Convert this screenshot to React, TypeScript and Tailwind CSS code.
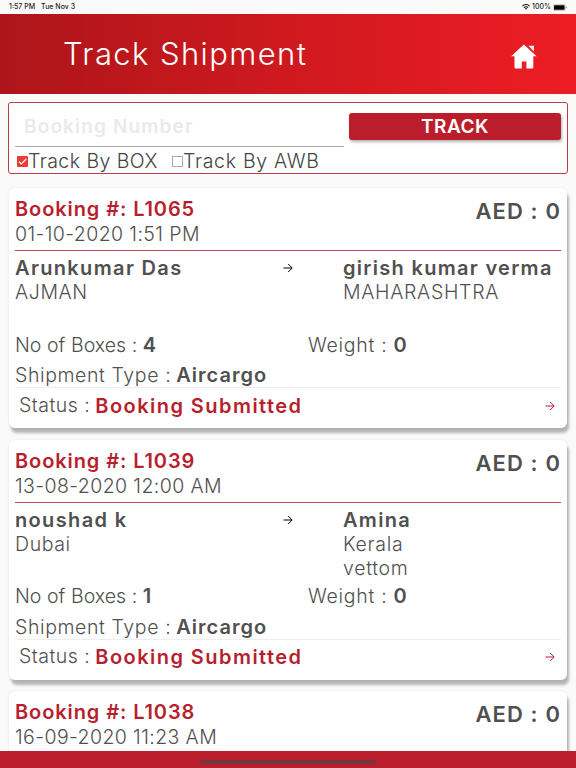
import clsx from "clsx";

type Details = {
  sender: string;
  origin: string;
  receiver: string;
  destination: string[];
  boxes: number;
  weight: number;
  type: string;
  status: string;
};

type Booking = {
  id: string;
  date: string;
  amount: number;
  details?: Details;
};

const bookings: Booking[] = [
  {
    id: "L1065",
    date: "01-10-2020 1:51 PM",
    amount: 0,
    details: { sender: "Arunkumar Das", origin: "AJMAN", receiver: "girish kumar verma", destination: ["MAHARASHTRA"], boxes: 4, weight: 0, type: "Aircargo", status: "Booking Submitted" },
  },
  {
    id: "L1039",
    date: "13-08-2020 12:00 AM",
    amount: 0,
    details: { sender: "noushad k", origin: "Dubai", receiver: "Amina", destination: ["Kerala", "vettom"], boxes: 1, weight: 0, type: "Aircargo", status: "Booking Submitted" },
  },
  { id: "L1038", date: "16-09-2020 11:23 AM", amount: 0 },
];

function ArrowIcon({ className }: { className?: string }) {
  return (
    <svg viewBox="0 0 10 10" className={clsx("h-[10px] w-[10px] shrink-0", className)} fill="none" stroke="currentColor" strokeWidth="1">
      <path d="M0.5 5H9M5.2 1L9.2 5L5.2 9" />
    </svg>
  );
}

function StatusBar() {
  return (
    <div className="flex h-[14px] shrink-0 items-center justify-between bg-[#fafafa] px-[9px] text-[7px] font-medium text-[#222]">
      <div className="flex gap-[6px]">
        <span>1:57 PM</span>
        <span>Tue Nov 3</span>
      </div>
      <div className="flex items-center gap-[2px]">
        <svg viewBox="0 0 8 6" className="h-[6px] w-[8px]" fill="none" stroke="#111" strokeWidth="1.1">
          <path d="M0.4 2.1Q4 -1 7.6 2.1M1.8 3.6Q4 1.8 6.2 3.6" />
          <path d="M2.8 4.5Q4 3.7 5.2 4.5L4 5.8Z" fill="#111" stroke="none" />
        </svg>
        <span>100%</span>
        <svg viewBox="0 0 14 7" className="h-[7px] w-[14px]">
          <rect x="0.3" y="0.5" width="12" height="6" rx="1.5" fill="#fff" stroke="#999" strokeWidth="0.5" />
          <rect x="1" y="1.2" width="10.6" height="4.6" rx="0.9" fill="#000" />
          <path d="M13 2.5v2q0.8-0.3 0.8-1t-0.8-1" fill="#888" />
        </svg>
      </div>
    </div>
  );
}

function Header() {
  return (
    <header className="flex h-20 shrink-0 items-center justify-between bg-linear-to-r from-[#ad151a] via-[#cf191f] to-[#ee1d24] pr-[39px] pl-[63px] text-white">
      <h1 className="text-[31px] leading-10 font-light tracking-[1.4px]">Track Shipment</h1>
      <svg viewBox="0 0 26 25" className="mt-1 h-[25px] w-[26px]" fill="currentColor">
        <path d="M12.8 0.5L25.6 12.2H22.3V23.4Q22.3 24.5 21.2 24.5H15.4V17.5H10.8V24.5H4.6Q3.5 24.5 3.5 23.4V12.2H0.2Z" />
        <path d="M17.5 1.8H22.9V7.4Z" />
      </svg>
    </header>
  );
}

function SearchBox() {
  return (
    <section className="mx-2 mt-2 h-[72px] shrink-0 rounded-[3px] border border-[#bf3a4b] bg-white">
      <div className="flex">
        <div className="ml-[6px] flex h-[44px] w-[329px] items-center border-b border-[#aaa] pt-[6px] pl-[9px] text-[19px] font-semibold tracking-[1.15px] text-[#e9eaea]">
          Booking Number
        </div>
        <button className="mt-[10px] ml-[5px] h-[27px] w-[212px] rounded-[3px] bg-[#bc1d2c] text-[19px] leading-[27px] font-semibold tracking-[0.5px] text-white shadow-[1px_2px_3px_rgba(0,0,0,0.3)]">
          TRACK
        </button>
      </div>
      <div className="flex h-[28px] items-center pt-px pl-2 text-[19.5px] font-light text-[#444]">
        <svg viewBox="0 0 11 11" className="h-[11px] w-[11px]">
          <rect width="11" height="11" rx="1" fill="#ee3a35" />
          <path d="M2 5.7L4.4 8L9.2 3" fill="none" stroke="#fff" strokeWidth="1.2" />
        </svg>
        <span className="w-[144px] pt-px tracking-[0.45px]">Track By BOX</span>
        <span className="h-[11px] w-[11px] border border-[#aaa]" />
        <span className="pt-px tracking-[0.7px]">Track By AWB</span>
      </div>
    </section>
  );
}

function BookingDetails({ details }: { details: Details }) {
  return (
    <>
      <div className="flex h-[76px] pt-[5px] leading-6">
        <div className="w-[268px]">
          <h3 className="text-[20px] font-semibold tracking-[1.35px]">{details.sender}</h3>
          <p className="font-light tracking-[0.6px]">{details.origin}</p>
        </div>
        <ArrowIcon className="mt-[7px] text-black" />
        <div className="ml-[50px] whitespace-nowrap">
          <h3 className="text-[20px] font-semibold tracking-[1.3px]">{details.receiver}</h3>
          {details.destination.map((line) => (
            <p key={line} className="font-light tracking-[0.7px]">{line}</p>
          ))}
        </div>
      </div>
      <div className="flex h-[29px] items-center pt-[6px] leading-6">
        <p className="w-[293px] font-light tracking-[0.05px]">
          No of Boxes : <b className="text-[20px] font-semibold">{details.boxes}</b>
        </p>
        <p className="font-light tracking-[0.7px]">
          Weight : <b className="text-[20px] font-semibold">{details.weight}</b>
        </p>
      </div>
      <p className="flex h-[32px] items-center gap-[5px] border-b border-[#eee] pt-[7px] leading-6 font-light tracking-[0.6px]">
        Shipment Type : <b className="text-[20px] font-semibold tracking-[1px]">{details.type}</b>
      </p>
      <div className="flex h-[35px] items-center justify-between pr-[6px] pl-1">
        <p className="flex items-center gap-[5px] font-light tracking-[0.5px]">
          Status : <b className="text-[20px] font-semibold tracking-[1.45px] text-[#b81f2e]">{details.status}</b>
        </p>
        <ArrowIcon className="text-[#b81f2e]" />
      </div>
    </>
  );
}

function BookingCard({ booking }: { booking: Booking }) {
  return (
    <article className="h-[240px] shrink-0 rounded-[6px] bg-white px-[6px] pt-[9px] text-[19.5px] text-[#505050] shadow-[2px_5px_3px_rgba(0,0,0,0.28),0_0_3px_rgba(0,0,0,0.08)]">
      <div className="flex h-[54px] justify-between border-b border-[#c4475a]">
        <div className="leading-[25px]">
          <h2 className="text-[20px] font-semibold tracking-[0.9px] text-[#b81f2e]">Booking #: {booking.id}</h2>
          <p className="font-light tracking-[0.4px]">{booking.date}</p>
        </div>
        <p className="text-[22px] leading-7 font-semibold tracking-[1.1px]">AED : {booking.amount}</p>
      </div>
      {booking.details && <BookingDetails details={booking.details} />}
    </article>
  );
}

export default function App() {
  return (
    <div className="flex h-[768px] w-[576px] flex-col overflow-hidden bg-[#fafafa] font-['Inter',sans-serif]">
      <StatusBar />
      <Header />
      <SearchBox />
      <main className="mt-[10px] flex min-h-0 flex-1 flex-col gap-[11.5px] overflow-hidden px-[9px] pt-1">
        {bookings.map((booking) => (
          <BookingCard key={booking.id} booking={booking} />
        ))}
      </main>
      <footer className="flex h-[17px] shrink-0 justify-center bg-[#bc1d2c] pt-[9px]">
        <div className="h-1 w-44 rounded-full bg-[#70383d]" />
      </footer>
    </div>
  );
}
